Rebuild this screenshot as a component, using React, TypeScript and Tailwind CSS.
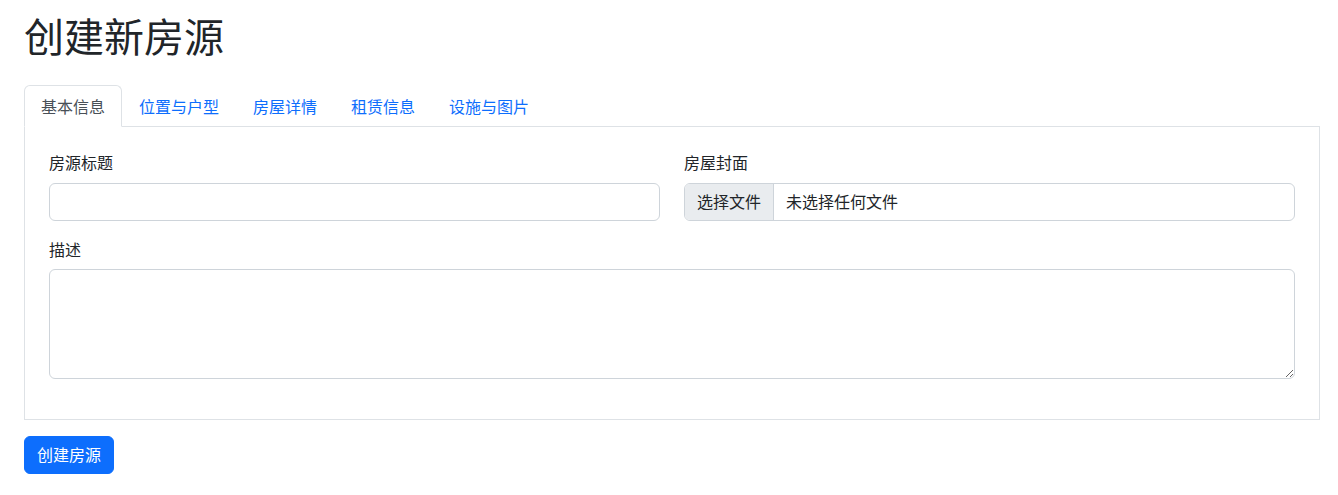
import { useState } from 'react'

const tabs = ['基本信息', '位置与户型', '房屋详情', '租赁信息', '设施与图片']

export default function App() {
  const [active, setActive] = useState(0)

  return (
    <div
      className="min-h-[495px] bg-white pl-6 pr-[18px] text-[16px] text-[#212529]"
      style={{ fontFamily: '"Liberation Sans", "Noto Sans CJK SC", sans-serif' }}
    >
      <h1 className="pt-[14px] mb-[23px] text-[40px] font-normal leading-[48px]">创建新房源</h1>

      <ul className="flex border-b border-[#dee2e6]">
        {tabs.map((t, i) => (
          <li key={t} className="-mb-px">
            <button
              onClick={() => setActive(i)}
              className={
                i === active
                  ? 'rounded-t-[6px] border border-[#dee2e6] border-b-white bg-white px-4 pt-[10px] pb-[6px] leading-6 text-[#495057]'
                  : 'rounded-t-[6px] border border-transparent px-4 pt-[10px] pb-[6px] leading-6 text-[#0d6efd]'
              }
            >
              {t}
            </button>
          </li>
        ))}
      </ul>

      <div className="border border-t-0 border-[#dee2e6] px-6 pt-6 pb-6">
        <div className="grid grid-cols-2 gap-x-6">
          <div className="mb-4">
            <label className="mb-2 block pt-[2px] leading-[22px]">房源标题</label>
            <input
              type="text"
              className="block h-[38px] w-full rounded-[6px] border border-[#ced4da] px-3 outline-none"
            />
          </div>
          <div className="mb-4">
            <label className="mb-2 block pt-[2px] leading-[22px]">房屋封面</label>
            <div className="flex h-[38px] w-full overflow-hidden rounded-[6px] border border-[#ced4da]">
              <span className="flex items-center border-r border-[#ced4da] bg-[#e9ecef] px-3 pt-px text-[#212529]">
                选择文件
              </span>
              <span className="flex items-center px-3 pt-px text-[#212529]">未选择任何文件</span>
            </div>
          </div>
        </div>
        <div className="mb-4">
          <label className="mb-2 block pt-[3px] leading-[21px]">描述</label>
          <textarea className="block h-[110px] w-full rounded-[6px] border border-[#ced4da] px-3 py-1.5 outline-none" />
        </div>
      </div>

      <button className="mt-4 h-[38px] rounded-[6px] border border-[#0d6efd] bg-[#0d6efd] px-3 pt-px leading-6 text-white">
        创建房源
      </button>
    </div>
  )
}
